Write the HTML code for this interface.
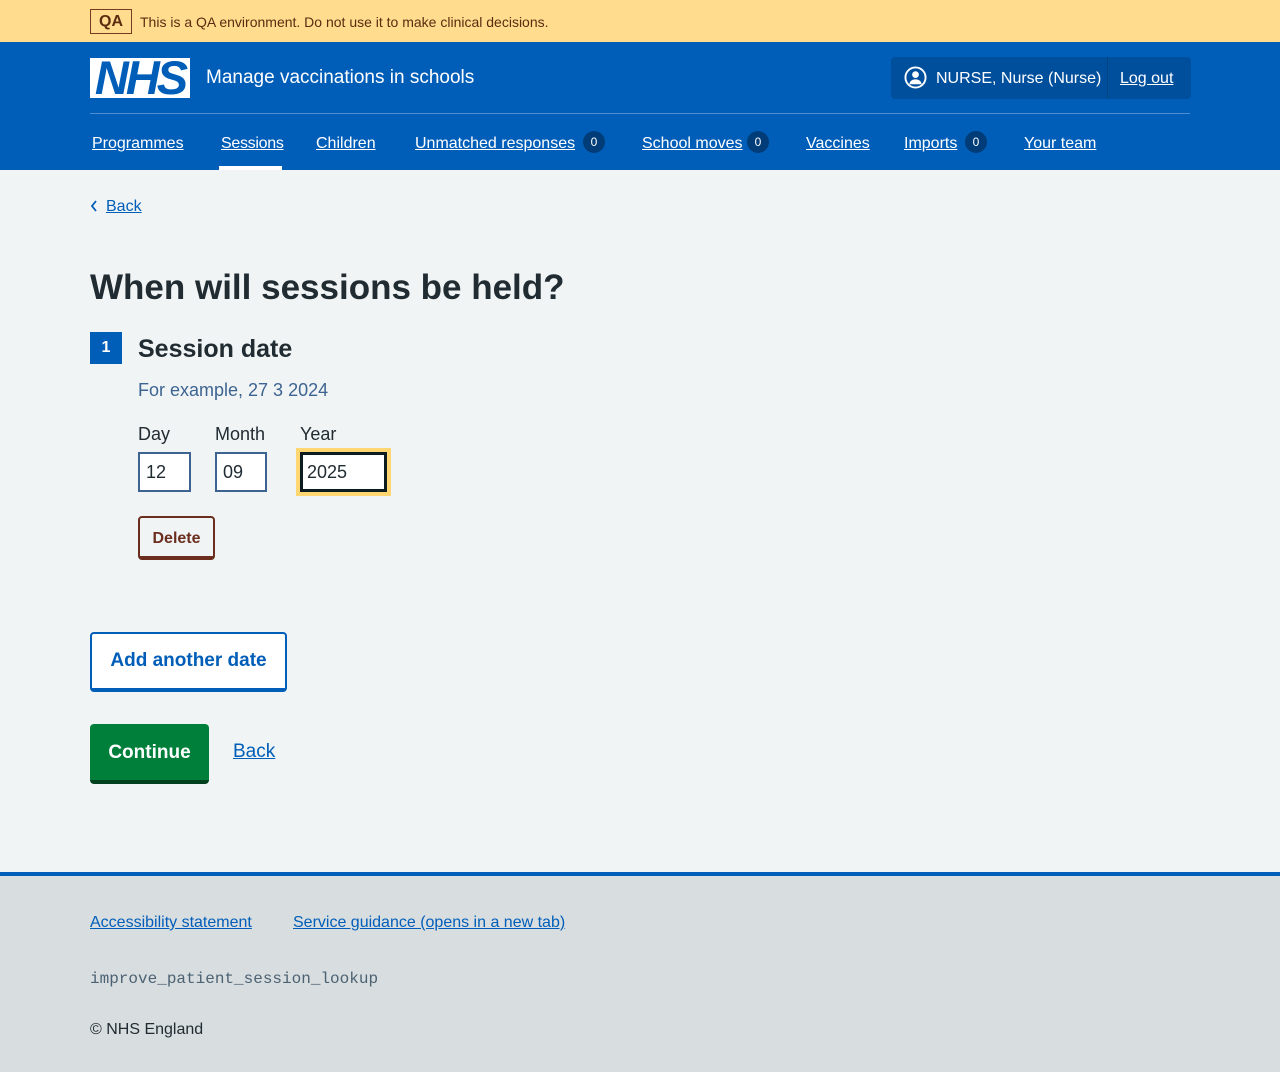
<!DOCTYPE html>
<html><head><style>
*{box-sizing:border-box;margin:0;padding:0}
body{width:1280px;height:1072px;font-family:"Liberation Sans",sans-serif;background:#f0f4f5;color:#212b32;position:relative;overflow:hidden}
.abs{position:absolute}
a{color:#005eb8;text-decoration:underline}
.qa{top:0;left:0;width:1280px;height:42px;background:#ffdc8e}
.hdr{top:42px;left:0;width:1280px;height:128px;background:#005eb8}
.nav a{position:absolute;top:134px;color:#fff;font-size:16px;line-height:20px}
.badge{display:inline-block;width:22px;height:22px;border-radius:11px;background:#003d78;color:#fff;font-size:12px;text-align:center;line-height:22px;position:absolute;top:131px}
.box{position:absolute;background:#fff;border:2px solid #4c6272;font-size:18px;padding:8px 0 0 6px;color:#212b32}
</style></head><body>
<div class="abs qa"></div>
<div class="abs" style="left:90px;top:9px;width:42px;height:25px;border:1px solid #7a3a22;color:#5a2c10;font-weight:bold;font-size:16px;text-align:center;line-height:23px">QA</div>
<div class="abs" style="left:140px;top:14px;font-size:14px;color:#5a2c10">This is a QA environment. Do not use it to make clinical decisions.</div>
<div class="abs hdr"></div>
<div class="abs" style="left:90px;top:58px;width:100px;height:40px;background:#fff"></div>
<div class="abs" style="left:92px;top:53px;width:96px;height:50px;color:#005eb8;font-weight:bold;font-style:italic;font-size:47px;letter-spacing:-3px;line-height:50px;text-align:center">NHS</div>
<div class="abs" style="left:206px;top:67px;color:#fff;font-size:19px">Manage vaccinations in schools</div>
<div class="abs" style="left:891px;top:57px;width:300px;height:42px;background:#004f9d;border-radius:4px"></div>
<div class="abs" style="left:1107px;top:57px;width:1px;height:42px;background:#00437f"></div>
<svg class="abs" style="left:904px;top:66px" width="23" height="23" viewBox="0 0 24 24"><circle cx="12" cy="12" r="10.5" fill="none" stroke="#fff" stroke-width="2"/><circle cx="12" cy="9" r="3.5" fill="#fff"/><path d="M5.5 19c1-4 3.5-5 6.5-5s5.5 1 6.5 5" fill="#fff"/></svg>
<div class="abs" style="left:936px;top:70px;color:#fff;font-size:16px">NURSE, Nurse (Nurse)</div>
<a class="abs" style="left:1120px;top:70px;color:#fff;font-size:16px">Log out</a>
<div class="abs" style="left:90px;top:113px;width:1100px;height:1px;background:#4d8ed1"></div>
<div class="nav">
<a style="left:92px">Programmes</a>
<a style="left:221px;letter-spacing:-0.3px">Sessions</a>
<a style="left:316px">Children</a>
<a style="left:415px">Unmatched responses</a><span class="badge" style="left:583px">0</span>
<a style="left:642px">School moves</a><span class="badge" style="left:747px">0</span>
<a style="left:806px">Vaccines</a>
<a style="left:904px">Imports</a><span class="badge" style="left:965px">0</span>
<a style="left:1024px">Your team</a>
</div>
<div class="abs" style="left:219px;top:166px;width:63px;height:4px;background:#fff"></div>
<svg class="abs" style="left:89px;top:199px" width="10" height="14" viewBox="0 0 10 14"><path d="M7 2L3 7l4 5" fill="none" stroke="#005eb8" stroke-width="1.8"/></svg>
<a class="abs" style="left:106px;top:198px;font-size:16px">Back</a>
<h1 class="abs" style="left:90px;top:268px;font-size:35px;font-weight:bold">When will sessions be held?</h1>
<div class="abs" style="left:90px;top:332px;width:32px;height:32px;background:#005eb8;color:#fff;font-weight:bold;font-size:16px;text-align:center;line-height:32px">1</div>
<div class="abs" style="left:138px;top:335px;font-size:25px;font-weight:bold">Session date</div>
<div class="abs" style="left:138px;top:380px;font-size:18px;color:#3d6491">For example, 27 3 2024</div>
<div class="abs" style="left:138px;top:424px;font-size:18px">Day</div>
<div class="abs" style="left:215px;top:424px;font-size:18px">Month</div>
<div class="abs" style="left:300px;top:424px;font-size:18px">Year</div>
<div class="box" style="left:138px;top:452px;width:53px;height:40px;border-color:#3d6491">12</div>
<div class="box" style="left:215px;top:452px;width:52px;height:40px;border-color:#3d6491">09</div>
<div class="abs" style="left:296px;top:448px;width:95px;height:48px;background:#ffd672"></div>
<div class="box" style="left:300px;top:452px;width:87px;height:40px;border:3px solid #0b1b1e;padding:7px 0 0 4px">2025</div>
<div class="abs" style="left:138px;top:516px;width:77px;height:44px;border:2px solid #6b2e1e;border-bottom-width:4px;border-radius:4px;color:#6b2e1e;font-weight:bold;font-size:16px;text-align:center;line-height:42px">Delete</div>
<div class="abs" style="left:90px;top:632px;width:197px;height:60px;border:2px solid #005eb8;border-bottom-width:4px;border-radius:4px;background:#fff;color:#005eb8;font-weight:bold;font-size:19px;text-align:center;line-height:54px">Add another date</div>
<div class="abs" style="left:90px;top:724px;width:119px;height:60px;background:#007f3b;border-bottom:4px solid #00401e;border-radius:4px;color:#fff;font-weight:bold;font-size:19px;text-align:center;line-height:58px">Continue</div>
<a class="abs" style="left:233px;top:741px;font-size:19px">Back</a>
<div class="abs" style="left:0;top:872px;width:1280px;height:200px;background:#d8dde0;border-top:4px solid #005eb8"></div>
<a class="abs" style="left:90px;top:914px;font-size:16px">Accessibility statement</a>
<a class="abs" style="left:293px;top:914px;font-size:16px">Service guidance (opens in a new tab)</a>
<div class="abs" style="left:90px;top:970px;font-family:'Liberation Mono',monospace;font-size:16px;color:#4c6272">improve_patient_session_lookup</div>
<div class="abs" style="left:90px;top:1021px;font-size:16px">© NHS England</div>
</body></html>
